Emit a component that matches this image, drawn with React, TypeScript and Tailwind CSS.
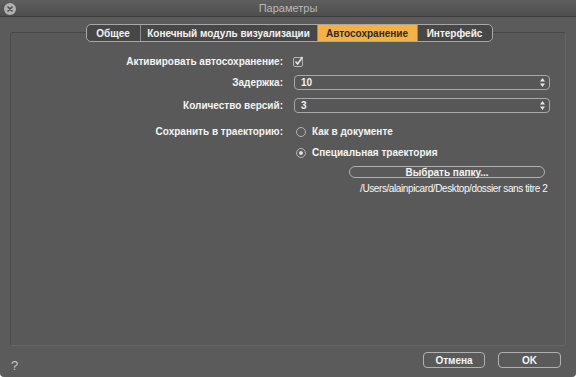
import React from 'react';

const font = { fontFamily: '"Liberation Sans", Arial, sans-serif' };

function Stepper() {
  return (
    <svg width="7" height="11" viewBox="0 0 7 11" className="shrink-0">
      <path d="M3.5 1 L6 4.5 L1 4.5 Z" fill="#e8e8e8" />
      <path d="M3.5 10 L6 6.5 L1 6.5 Z" fill="#e8e8e8" />
    </svg>
  );
}

function NumberField({ value }: { value: string }) {
  return (
    <div className="flex h-[15px] w-[256px] items-center justify-between rounded-[4px] border border-[#a9a9a9] bg-[#575757] pl-[6px] pr-[3px]">
      <span className="text-[10px] font-bold text-[#f2f2f2]">{value}</span>
      <Stepper />
    </div>
  );
}

function Radio({ checked }: { checked?: boolean }) {
  return (
    <span className="flex h-[10px] w-[10px] items-center justify-center rounded-full border border-[#b5b5b5] bg-[#5a5a5a]">
      {checked && <span className="h-[4px] w-[4px] rounded-full bg-[#dedede]" />}
    </span>
  );
}

const tabs = [
  { label: 'Общее', w: 'w-[53px]' },
  { label: 'Конечный модуль визуализации', w: 'w-[177px]' },
  { label: 'Автосохранение', w: 'w-[100px]', active: true },
  { label: 'Интерфейс', w: 'w-[75px]' },
];

export default function App() {
  return (
    <div
      className="flex h-[377px] w-[576px] flex-col overflow-hidden rounded-b-[4px] bg-[#5b5b5b] text-[#f4f4f4]"
      style={font}
    >
      {/* title bar */}
      <div className="relative flex h-[17px] shrink-0 items-center justify-center border-b border-[#3c3c3c] bg-gradient-to-b from-[#5e5e5e] to-[#4e4e4e]">
        <span className="absolute left-[4px] top-[3px] flex h-[12px] w-[12px] items-center justify-center rounded-full bg-[#b0b0b0]">
          <svg width="6" height="6" viewBox="0 0 6 6">
            <path d="M1 1 L5 5 M5 1 L1 5" stroke="#4a4a4a" strokeWidth="1.6" strokeLinecap="round" />
          </svg>
        </span>
        <span className="text-[11px] text-[#b9b9b9]">Параметры</span>
      </div>

      <div className="flex flex-1 flex-col px-[10px] pt-[7px]">
        {/* tabs */}
        <div className="relative z-10 flex justify-center pl-[2px]">
          <div className="flex h-[18px] overflow-hidden rounded-[5px] border border-[#a8a8a8] bg-[#474747]">
            {tabs.map((t, i) => (
              <div
                key={t.label}
                className={`${t.w} flex items-center justify-center text-[10px] font-bold ${
                  i > 0 ? 'border-l border-[#8c8c8c]' : ''
                } ${t.active ? 'bg-[#f5b244] text-[#2b2b2b]' : 'text-[#f4f4f4]'}`}
              >
                {t.label}
              </div>
            ))}
          </div>
        </div>

        {/* group box */}
        <div className="-mt-[10px] h-[314px] shrink-0 rounded-[3px] border border-t-[#474747] border-l-[#4c4c4c] border-r-[#646464] border-b-[#666666] bg-[#595959] pt-[20px]">
          <div className="grid grid-cols-[272px_1fr] items-center gap-x-[10px] text-[10px] font-bold">
            <div className="flex h-[17px] items-center justify-end">Активировать автосохранение:</div>
            <div className="flex h-[17px] items-center">
              <svg width="12" height="11" viewBox="0 0 12 11">
                <rect x="0.5" y="1.5" width="9" height="9" rx="1.5" fill="#5a5a5a" stroke="#b5b5b5" />
                <path d="M2.5 5.5 L4.6 8 L9.5 1" stroke="#e6e6e6" strokeWidth="1.6" fill="none" />
              </svg>
            </div>

            <div className="mt-[4px] flex h-[17px] items-center justify-end">Задержка:</div>
            <div className="mt-[4px] flex h-[17px] items-center pl-[1px]">
              <NumberField value="10" />
            </div>

            <div className="mt-[6px] flex h-[17px] items-center justify-end">Количество версий:</div>
            <div className="mt-[6px] flex h-[17px] items-center pl-[1px]">
              <NumberField value="3" />
            </div>

            <div className="mt-[9px] flex h-[17px] items-center justify-end">Сохранить в траекторию:</div>
            <div className="mt-[9px] flex h-[17px] items-center gap-[6px] pl-[3px]">
              <Radio />
              <span>Как в документе</span>
            </div>

            <div className="mt-[4px] h-[17px]" />
            <div className="mt-[4px] flex h-[17px] items-center gap-[6px] pl-[3px]">
              <Radio checked />
              <span>Специальная траектория</span>
            </div>

            <div className="mt-[5px]" />
            <div className="mt-[5px] flex flex-col items-start pl-[56px]">
              <div className="flex h-[12px] w-[196px] items-center justify-center rounded-full border border-[#b0b0b0] bg-[#5a5a5a]">
                Выбрать папку...
              </div>
              <div className="mt-[3px] whitespace-nowrap pl-[11px] text-[10px] font-normal tracking-[-0.4px] text-[#f8f8f8]">
                /Users/alainpicard/Desktop/dossier sans titre 2
              </div>
            </div>
          </div>
        </div>

        {/* footer */}
        <div className="mt-[6px] flex items-start justify-between pl-[1px] pr-[5px]">
          <span className="mt-[7px] text-[13px] leading-none text-[#c8c8c8]">?</span>
          <div className="flex gap-[13px] text-[10px] font-bold">
            <div className="flex h-[16px] w-[62px] items-center justify-center rounded-[4px] border border-[#b0b0b0] bg-[#5a5a5a]">
              Отмена
            </div>
            <div className="flex h-[16px] w-[63px] items-center justify-center rounded-[4px] border border-[#b0b0b0] bg-[#5a5a5a]">
              OK
            </div>
          </div>
        </div>
      </div>
    </div>
  );
}
